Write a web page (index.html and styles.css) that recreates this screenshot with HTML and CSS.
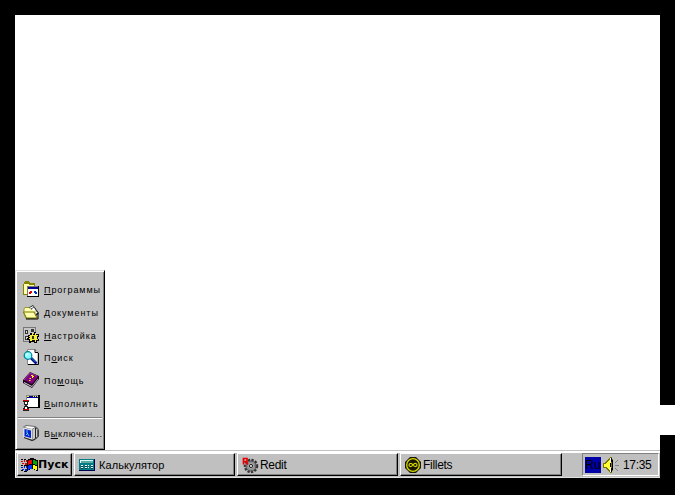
FILE: index.html
```html
<!DOCTYPE html>
<html lang="ru">
<head>
<meta charset="utf-8">
<title>Рабочий стол</title>
<link rel="stylesheet" href="styles.css">
</head>
<body>
<div class="screen">
  <main class="desktop">
    <nav class="start-menu">
      <a class="item"><svg class="icon" viewBox="0 0 16 16" shape-rendering="crispEdges"><path d="M0 3h1V1h1V0h4v1h1v1h5v3h4v11H4v-2H0z" fill="#848400"/><path d="M1 3h5v1h5v9H1z" fill="#ffffa8"/><path d="M4 5h12v11H4z" fill="#000"/><path d="M4 5h11v10H4z" fill="#777"/><path d="M5 8h10v7H5z" fill="#fff"/><path d="M5 6h10v2H5z" fill="#000090"/><path d="M6 11h1v-1h2v2H8v1H6z" fill="#e00000"/><path d="M11 10h2v1h1v2h-2v-1h-1z" fill="#0030c0"/></svg><span class="label"><u>П</u>рограммы</span></a>
      <a class="item"><svg class="icon" viewBox="0 0 16 16"><path d="M5 4l5-3 6 8-3 3z" fill="#222"/><path d="M5.500 4.500L10 2l4.500 6.500L12 11z" fill="#fff"/><path d="M8 5l3-1M9 7l3-1" stroke="#004c80"/><path d="M1 5l1-1.500h4l2 2h4v9H3l-2-5z" fill="#ffffb0" stroke="#777700" stroke-width=".7"/><path d="M8 5l3-2 3 5" fill="#fff" stroke="#222" stroke-width=".7"/><path d="M.5 8h10.500l3 6H3.500z" fill="#ffffb0" stroke="#777700"/><path d="M3 15h12V9" fill="none" stroke="#000"/></svg><span class="label"><u>Д</u>окументы</span></a>
      <a class="item"><svg class="icon" viewBox="0 0 16 16" shape-rendering="crispEdges"><path d="M0 0h13v15H0z" fill="#777"/><path d="M1 1h11v13H1z" fill="#c6c6c6"/><path d="M2 3h3v4H2zM2 9h4v4H2zM8 2h3v3H8z" fill="#333"/><path d="M3 4h1v2H3zM3 10h2v2H3z" fill="#ddd"/><path d="M5 8h2V6h2v1h2V5h2v2h3v3h-1v2h1v2h-2v2h-3v-1H8v1H6v-3H4v-2h1z" fill="#000"/><path d="M6 9h1V8h2V6h1v2h2V6h1v2h2v1h-1v3h1v1h-2v2h-1v-2H9v1H7v-2H6v-1h1v-1H6z" fill="#f4ec38"/><path d="M9 9h2v3H9z" fill="#333300"/></svg><span class="label"><u>Н</u>астройка</span></a>
      <a class="item"><svg class="icon" viewBox="0 0 16 16"><path d="M4.500.5H12l3 3v12H4.500z" fill="#fff" stroke="#888"/><path d="M15.500 4v11.500H5M12 .5v3h3" fill="none" stroke="#000"/><path d="M8 9l5.500 5.500" stroke="#000080" stroke-width="2.600"/><path d="M8 8.500l5 5" stroke="#00a0d0" stroke-width="1"/><circle cx="5" cy="6.500" r="3.800" fill="#8ff" stroke="#007c96" stroke-width="1.200"/><path d="M3 7l2-3" stroke="#fff"/></svg><span class="label">П<u>о</u>иск</span></a>
      <a class="item"><svg class="icon" viewBox="0 0 16 16"><path d="M0 8L7 0l9 4v3l-7 9-9-5z" fill="#180018"/><path d="M1 8l6-7 8 3.500L9 12z" fill="#800080"/><path d="M1 10l8 4 6-7.500v1L9 15l-8-4z" fill="#ddd"/><path d="M1 8l6-7 7 3" fill="none" stroke="#c050c0" stroke-width=".7"/><path d="M7 4h1V3h2v1h1v1h-1v1H8v1H6.500V6H9V4zM6 8h1.500v1H6z" fill="#ff0"/></svg><span class="label">По<u>м</u>ощь</span></a>
      <a class="item"><svg class="icon" viewBox="0 0 16 16" shape-rendering="crispEdges"><path d="M3 0h14v13H3z" fill="#000"/><path d="M3 0h12v12H3z" fill="#888"/><path d="M4 3h11v9H4z" fill="#fff"/><path d="M4 1h11v2H4z" fill="#0000a0"/><path d="M4 1h2v1H4zM10 1h1v1h-1zM12 1h1v1h-1zM14 1h1v1h-1z" fill="#ff0"/><path d="M0 5h6v2H5v3H4v1h1v2h1v3H0v-3h1v-2h1v-1H1V7H0z" fill="#222"/><path d="M0 5h6v1H0zM0 14h6v1H0z" fill="#d00000"/><path d="M2 7h2v2H2zM2 12h2v2H2z" fill="#fff"/></svg><span class="label"><u>В</u>ыполнить</span></a>
      <hr class="divider">
      <a class="item shutdown"><svg class="icon" viewBox="0 0 16 16"><path d="M0 2l3-2 9 1 3 2 1 2v6l-3 3-4 2-8-3z" fill="#666"/><path d="M1 2l3-1 8 1-3 2z" fill="#fff"/><path d="M0 2.500l9 1.500v10.500L0 12z" fill="#ddd"/><path d="M9.500 4.500L12 3v10l-2.500 2zM13 4l1.500.5v7L13 13z" fill="#ccc"/><path d="M1.500 4L8 5.500V13l-6.500-1.800z" fill="#001fd0"/><path d="M4 5v3l2 3M3 10l2-2" fill="none" stroke="#6df" stroke-width=".9"/><path d="M12.500 3v10M15 5v6.500l-3 3-3 1-8-3" fill="none" stroke="#111" stroke-width=".8"/></svg><span class="label">В<u>ы</u>ключен...</span></a>
    </nav>
  </main>
  <footer class="taskbar">
    <button class="button start"><svg class="flag" viewBox="0 0 17 14" shape-rendering="crispEdges"><path d="M7 1h2V0h4v1h2v1h2v11h-2v-1h-2v-1H9v1H7v1H6V2h1z" fill="#000"/><path d="M7 3h1V2h3v4H8v1H7z" fill="#f00000"/><path d="M12 2h2v1h2v4h-2V6h-2z" fill="#00a800"/><path d="M7 8h1V7h3v4H8v1H7z" fill="#0030ff"/><path d="M12 7h2v1h2v4h-2v-1h-2z" fill="#ffff00"/><path d="M0 3h2v1H0zM3 2h1v2H3zM5 2h1v2H5zM1 5h2v1H1zM4 5h2v2H4z" fill="#e00000"/><path d="M0 9h2v1H0zM3 8h1v2H3zM5 8h1v2H5zM1 11h2v1H1zM4 11h2v2H4z" fill="#0020e0"/><path d="M0 1h2v1H0zM3 1h2v1H3zM0 7h2v1H0zM3 7h3v1H3zM0 12h2v1H0zM3 13h3v1H3z" fill="#000"/></svg><span class="start-text">Пуск</span></button>
    <button class="button task calc"><svg class="icon" viewBox="0 0 16 16" shape-rendering="crispEdges"><path d="M0 2h16v12H0z" fill="#000050"/><path d="M0 2h15v11H0z" fill="#007c84"/><path d="M1 3h13v3H1z" fill="#dfffff"/><path d="M2 4h12v2H2z" fill="#60a8a0"/><path d="M2 8h2v1H2zM6 8h2v1H6zM9 8h1v1H9zM12 8h2v1h-2zM2 10h2v1H2zM6 10h2v1H6zM9 10h1v1H9zM12 10h2v1h-2z" fill="#fff"/><path d="M2 9h2v1H2zM6 9h2v1H6zM12 9h2v1h-2zM2 11h2v1H2zM6 11h2v1H6zM12 11h2v1h-2z" fill="#003c48"/></svg><span class="task-text">Калькулятор</span></button>
    <button class="button task redit"><svg class="icon" viewBox="0 0 16 16"><circle cx="9" cy="9" r="6" fill="#aaa" stroke="#333" stroke-width="2.500" stroke-dasharray="2.200 1.300"/><circle cx="9" cy="9" r="5" fill="none" stroke="#555" stroke-width="1"/><circle cx="9" cy="9" r="3.500" fill="none" stroke="#888" stroke-width="1.200"/><circle cx="9" cy="9" r="1.600" fill="#ddd" stroke="#222"/><path d="M1.500 7.500v-6H5v3H2M3.500 4.500L6 7.500" fill="none" stroke="#e80000" stroke-width="1.700"/></svg><span class="task-text">Redit</span></button>
    <button class="button task fillets"><svg class="icon" viewBox="0 0 16 16"><path d="M5 0h6l5 5v6l-5 5H5l-5-5V5z" fill="#181800"/><circle cx="8" cy="8" r="6.300" fill="none" stroke="#d8d800" stroke-width="1.300"/><path d="M8 8C6.500 5.800 4 6 4 8s2.500 2.200 4 0 4-2 4 0-2.500 2.200-4 0z" fill="none" stroke="#e0e000" stroke-width="1.100"/></svg><span class="task-text">Fillets</span></button>
    <div class="tray">
      <span class="lang">Ru</span>
      <svg class="icon speaker" viewBox="0 0 16 16" shape-rendering="crispEdges"><path d="M0 6h2V5h1V4h1V3h1V2h1V1h1V0h2v2h1v12H9v2H7v-1H6v-1H5v-1H4v-1H3v-1H0z" fill="#777700"/><path d="M1 7h2V6h1V5h1V4h1V3h1v10H6v-1H5v-1H4v-1H1z" fill="#ff3"/><path d="M7 1h1v14H7z" fill="#fff"/><path d="M8 1h1v4H8zM8 11h1v4H8zM9 3h1v10H9zM7 6h1v4H7z" fill="#000"/><path d="M12 8h4v1h-4zM12 5h1v1h-1zM13 4h1v1h-1zM14 3h1v1h-1zM12 11h1v1h-1zM13 12h1v1h-1zM14 13h1v1h-1z" fill="#808080"/></svg>
      <time class="clock">17:35</time>
    </div>
  </footer>
  <div class="notch"></div>
</div>
</body>
</html>
```
FILE: styles.css
```css
* { box-sizing: border-box; }
body { margin: 0; background: #000; font-family: "Liberation Sans", Arial, sans-serif; color: #000; }
.screen { position: relative; width: 675px; height: 495px; padding: 15px 15px 17px; display: flex; flex-direction: column; overflow: hidden; }
.desktop { height: 435px; background: #fff; display: flex; align-items: flex-end; }
.start-menu { width: 90px; height: 180px; background: #c0c0c0; padding: 7px 0 0 7px; border: 1px solid #dfdfdf; border-right: 1px solid #000; border-bottom: 1px solid #000; box-shadow: inset 1px 1px #fff, inset -1px -1px #808080; }
.item { display: flex; align-items: center; height: 22.700px; gap: 5px; white-space: nowrap; }
.icon { width: 16px; height: 16px; flex: none; display: block; overflow: visible; }
.label { font-size: 9px; line-height: 12px; letter-spacing: .93px; padding-top: 2px; }
.shutdown .label { letter-spacing: .75px; }
u { text-decoration-thickness: 1px; text-underline-offset: 1px; }
.divider { margin: 3px 2px 3px -5px; border: 0; height: 2px; border-top: 1px solid #808080; border-bottom: 1px solid #fff; }
.taskbar { height: 28px; background: #c0c0c0; border-top: 1px solid #c0c0c0; border-bottom: 1px solid #dfdfdf; box-shadow: inset 0 2px #fff, inset 1px 0 #fff; padding: 2px 1px 1px 2px; display: flex; }
.button { height: 23px; border: 1px solid #fff; border-right-color: #000; border-bottom-color: #000; border-radius: 0; background: #c0c0c0; box-shadow: inset -1px -1px #808080; padding: 0 3px; display: flex; align-items: center; color: #000; font-family: "Liberation Sans", Arial, sans-serif; white-space: nowrap; }
.start { width: 55px; margin-right: 2px; gap: 0; }
.flag { width: 17px; height: 14px; flex: none; }
.start-text { font-family: "DejaVu Sans", sans-serif; font-size: 11px; font-weight: bold; }
.task { width: 161px; margin-right: 2px; gap: 2px; font-size: 12px; }
.calc { padding-left: 4px; gap: 4px; font-size: 11px; letter-spacing: .1px; }
.redit { padding-left: 4px; }
.fillets { width: 162px; padding-left: 4px; }
.redit .task-text, .fillets .task-text { letter-spacing: -.3px; }
.tray { margin-left: auto; width: 77px; height: 23px; border: 1px solid #808080; border-right-color: #fff; border-bottom-color: #fff; display: flex; align-items: center; padding: 0 2px; gap: 2px; }
.lang { width: 16px; height: 16px; background: #0000a8; font-size: 12px; line-height: 16px; text-align: center; }
.clock { font-size: 12px; letter-spacing: -.35px; margin-left: 2px; }
.notch { position: absolute; right: 0; top: 405px; width: 15px; height: 30px; background: #fff; }
```
